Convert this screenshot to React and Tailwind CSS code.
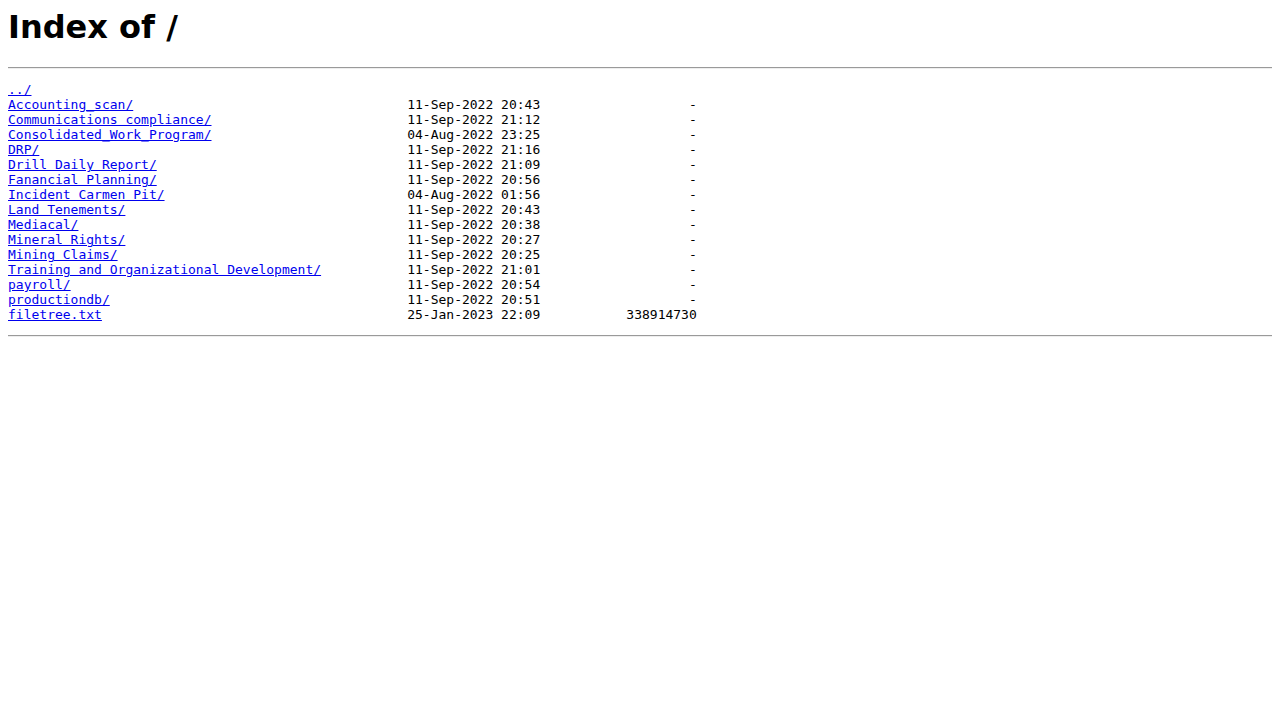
import React from 'react';

// entries as listed by the server
const entries = [
  { name: 'Accounting_scan/', date: '11-Sep-2022 20:43', size: '-' },
  { name: 'Communications compliance/', date: '11-Sep-2022 21:12', size: '-' },
  { name: 'Consolidated_Work_Program/', date: '04-Aug-2022 23:25', size: '-' },
  { name: 'DRP/', date: '11-Sep-2022 21:16', size: '-' },
  { name: 'Drill Daily Report/', date: '11-Sep-2022 21:09', size: '-' },
  { name: 'Fanancial Planning/', date: '11-Sep-2022 20:56', size: '-' },
  { name: 'Incident Carmen Pit/', date: '04-Aug-2022 01:56', size: '-' },
  { name: 'Land Tenements/', date: '11-Sep-2022 20:43', size: '-' },
  { name: 'Mediacal/', date: '11-Sep-2022 20:38', size: '-' },
  { name: 'Mineral Rights/', date: '11-Sep-2022 20:27', size: '-' },
  { name: 'Mining Claims/', date: '11-Sep-2022 20:25', size: '-' },
  { name: 'Training and Organizational Development/', date: '11-Sep-2022 21:01', size: '-' },
  { name: 'payroll/', date: '11-Sep-2022 20:54', size: '-' },
  { name: 'productiondb/', date: '11-Sep-2022 20:51', size: '-' },
  { name: 'filetree.txt', date: '25-Jan-2023 22:09', size: '338914730' },
];

const Rule = () => (
  <hr className="border-0 border-t border-b border-t-[#9a9a9a] border-b-[#eeeeee] h-0" />
);

export default function App() {
  return (
    <div className="bg-white min-h-[720px] p-2 text-black">
      <h1 className="font-['DejaVu_Sans',sans-serif] text-[32px] font-bold leading-[normal] mb-[21.44px]">
        Index of /
      </h1>
      <Rule />
      <pre className="font-['DejaVu_Sans_Mono',monospace] text-[13px] leading-[normal] mt-[13px] mb-[13px] whitespace-pre">
        <a href="#" className="text-[#0000ee] underline">../</a>
        {'\n'}
        {entries.map((e) => (
          <React.Fragment key={e.name}>
            <a href="#" className="text-[#0000ee] underline">{e.name}</a>
            {' '.repeat(Math.max(1, 51 - e.name.length))}
            {e.date}
            {e.size.padStart(20, ' ')}
            {'\n'}
          </React.Fragment>
        ))}
      </pre>
      <Rule />
    </div>
  );
}
